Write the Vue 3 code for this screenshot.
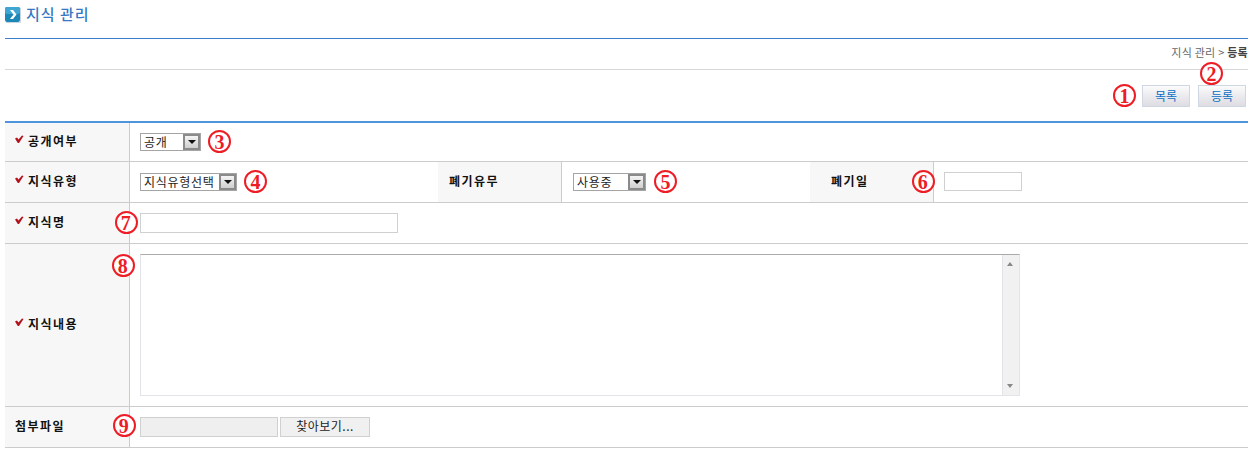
<script setup>
const checkPath = 'M0 3.5 L2 2.5 L3.5 4.5 L7 0.5 L8.5 1 L4 8 L2.8 8 Z'
</script>

<template>
  <div class="page">
    <header class="title-bar">
      <svg class="title-icon" width="16" height="16" viewBox="0 0 16 16">
        <rect x="0" y="0" width="15" height="15" rx="2" fill="#1d87b8" />
        <rect x="0" y="0" width="15" height="7" rx="2" fill="#3fa6d2" />
        <path d="M5 3 L8 3 L11.5 7.5 L8 12 L5 12 L8.5 7.5 Z" fill="#fff" />
        <path d="M1 15.5 H15.5 V1" stroke="#c9d4dc" fill="none" />
      </svg>
      <h1 class="title">지식 관리</h1>
    </header>

    <nav class="crumbs">지식 관리 &gt; <b>등록</b></nav>

    <div class="toolbar">
      <span class="badge">1</span>
      <button class="btn">목록</button>
      <span class="btn-wrap">
        <span class="badge badge-over">2</span>
        <button class="btn">등록</button>
      </span>
    </div>

    <section class="form">
      <div class="row row-a">
        <div class="th">
          <svg class="check" width="9" height="9" viewBox="0 0 9 9"><path :d="checkPath" fill="#b3121d" /></svg>
          공개여부
        </div>
        <div class="td">
          <span class="select s3"><span class="val">공개</span><i class="arrow"></i></span>
          <span class="badge inline">3</span>
        </div>
      </div>

      <div class="row row-b">
        <div class="th">
          <svg class="check" width="9" height="9" viewBox="0 0 9 9"><path :d="checkPath" fill="#b3121d" /></svg>
          지식유형
        </div>
        <div class="td w1">
          <span class="select s4"><span class="val">지식유형선택</span><i class="arrow"></i></span>
          <span class="badge inline">4</span>
        </div>
        <div class="th plain p11">폐기유무</div>
        <div class="td w2">
          <span class="select s5"><span class="val">사용중</span><i class="arrow"></i></span>
          <span class="badge inline">5</span>
        </div>
        <div class="th plain p21 has-badge">
          폐기일
          <span class="badge b6">6</span>
        </div>
        <div class="td">
          <span class="input i6"></span>
        </div>
      </div>

      <div class="row row-c">
        <div class="th has-badge">
          <svg class="check" width="9" height="9" viewBox="0 0 9 9"><path :d="checkPath" fill="#b3121d" /></svg>
          지식명
          <span class="badge b7">7</span>
        </div>
        <div class="td">
          <span class="input i7"></span>
        </div>
      </div>

      <div class="row row-d">
        <div class="th has-badge">
          <svg class="check" width="9" height="9" viewBox="0 0 9 9"><path :d="checkPath" fill="#b3121d" /></svg>
          지식내용
          <span class="badge b8">8</span>
        </div>
        <div class="td">
          <div class="textarea">
            <div class="text-body"></div>
            <div class="scroll">
              <i class="up"></i>
              <i class="down"></i>
            </div>
          </div>
        </div>
      </div>

      <div class="row row-e">
        <div class="th has-badge nocheck">
          첨부파일
          <span class="badge b9">9</span>
        </div>
        <div class="td file">
          <span class="file-name"></span>
          <span class="file-btn">찾아보기...</span>
        </div>
      </div>
    </section>
  </div>
</template>

<style>
body { margin: 0; background: #fff; }
</style>

<style scoped>
.page {
  width: 1243px;
  margin-left: 5px;
  font-family: "Noto Sans CJK KR", "Liberation Sans", sans-serif;
  font-size: 12px;
  color: #222;
}
.title-bar {
  height: 38px;
  display: flex;
  align-items: flex-start;
  gap: 5px;
  padding-top: 7px;
  box-sizing: border-box;
}
.title-icon { flex: none; }
.title {
  margin: -4px 0 0;
  font-size: 15px;
  font-weight: 500;
  letter-spacing: 1px;
  line-height: 22px;
  color: #3777c4;
}
.crumbs {
  border-top: 1px solid #3b7fce;
  border-bottom: 1px solid #d9d9d9;
  height: 30px;
  line-height: 27px;
  text-align: right;
  font-size: 11px;
  letter-spacing: 0.25px;
  color: #666;
}
.crumbs b { color: #444; font-weight: 700; }
.toolbar {
  height: 51px;
  display: flex;
  justify-content: flex-end;
  align-items: flex-start;
  padding: 15px 2px 0 0;
  box-sizing: border-box;
}
.toolbar > .badge { margin: -1px 6px 0 0; }
.btn-wrap { position: relative; margin-left: 8px; display: block; height: 22px; }
.btn {
  width: 48px;
  height: 22px;
  padding: 0;
  border: 1px solid #cfd6e4;
  background: linear-gradient(#fbfbfc, #dcdce2);
  color: #0b6fc2;
  font: 12px "Noto Sans CJK KR", "Liberation Sans", sans-serif;
  line-height: 18px;
  display: block;
}
.badge {
  display: inline-flex;
  align-items: center;
  justify-content: center;
  flex: none;
  width: 23px;
  height: 23px;
  box-sizing: border-box;
  border: 2px solid #ee1c25;
  border-radius: 50%;
  background: #fff;
  color: #ee1c25;
  font: 700 20px/1 "Liberation Serif", serif;
}
.badge-over { position: absolute; left: 2px; top: -23px; }
.form {
  border-top: 2px solid #4f94dc;
}
.row {
  display: flex;
  border-bottom: 1px solid #ccc;
}
.row-a { height: 38px; }
.row-b { height: 40px; }
.row-c { height: 40px; }
.row-d { height: 162px; }
.row-e { height: 40px; }
.th {
  position: relative;
  flex: none;
  width: 125px;
  box-sizing: border-box;
  background: #f7f7f7;
  border-right: 1px solid #ccc;
  display: flex;
  align-items: center;
  padding: 0 0 3px 10px;
  font-weight: 700;
  letter-spacing: 1.5px;
  color: #111;
  line-height: 16px;
}
.check { margin-right: 4px; margin-top: -3px; flex: none; }
.plain { width: 124px; }
.p11 { padding-left: 11px; }
.p21 { padding-left: 21px; }
.td {
  flex: 1;
  min-width: 0;
  box-sizing: border-box;
  padding: 10px 0 0 10px;
  display: flex;
  align-items: flex-start;
}
.w1 { flex: none; width: 308px; padding-top: 11px; }
.w2 { flex: none; width: 248px; padding: 11px 0 0 11px; }
.select {
  flex: none;
  box-sizing: border-box;
  height: 18px;
  border: 1px solid #a5a5a5;
  display: flex;
  justify-content: space-between;
  background: #fff;
  font-size: 12px;
  line-height: 15px;
  letter-spacing: 0.7px;
  color: #222;
}
.val { padding-left: 3px; white-space: nowrap; }
.s3 { width: 61px; }
.s4 { width: 97px; }
.s5 { width: 73px; }
.arrow {
  flex: none;
  width: 17px;
  height: 16px;
  box-sizing: border-box;
  border: 2px solid #8a8a8a;
  background: linear-gradient(#f4f4f4, #cfcfcf);
  position: relative;
  display: block;
}
.arrow::after {
  content: "";
  position: absolute;
  left: 3px;
  top: 4px;
  border-left: 4px solid transparent;
  border-right: 4px solid transparent;
  border-top: 4px solid #111;
}
.inline { margin: -3px 0 0 7px; }
.s5 + .inline { margin-left: 8px; }
.input {
  display: block;
  box-sizing: border-box;
  border: 1px solid #d0d0d0;
  background: #fff;
}
.i6 { width: 78px; height: 19px; }
.i7 { width: 258px; height: 20px; }
.b6 { position: absolute; left: 102px; top: 8px; }
.b7 { position: absolute; left: 110px; top: 8px; }
.b8 { position: absolute; left: 107px; top: 10px; }
.b9 { position: absolute; left: 108px; top: 7px; }
.textarea {
  width: 880px;
  height: 142px;
  box-sizing: border-box;
  border: 1px solid #e3e3ea;
  border-top-color: #aaa;
  display: flex;
}
.text-body { flex: 1; }
.scroll {
  width: 16px;
  background: #f1f1f1;
  border-left: 1px solid #e3e3e8;
  position: relative;
}
.up, .down {
  position: absolute;
  left: 4px;
  border-left: 3.5px solid transparent;
  border-right: 3.5px solid transparent;
}
.up { top: 7px; border-bottom: 4px solid #888; }
.down { bottom: 7px; border-top: 4px solid #888; }
.file { gap: 2px; }
.file-name {
  width: 138px;
  height: 20px;
  box-sizing: border-box;
  background: #efefef;
  border: 1px solid #d0d0d0;
}
.file-btn {
  width: 90px;
  height: 20px;
  box-sizing: border-box;
  background: #f0f0f0;
  border: 1px solid #d0d0d0;
  text-align: center;
  font-size: 12px;
  letter-spacing: 0.5px;
  line-height: 16px;
  color: #222;
}
</style>
